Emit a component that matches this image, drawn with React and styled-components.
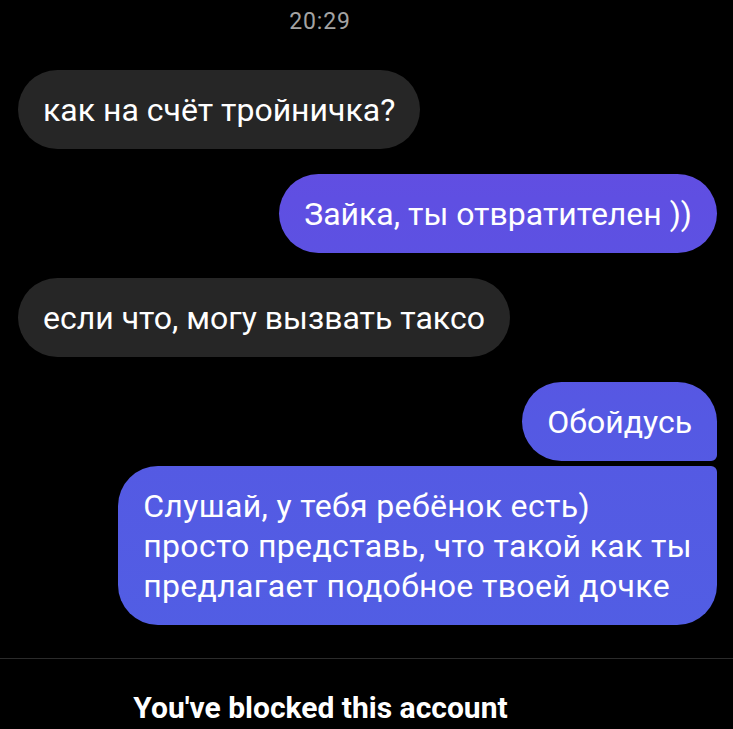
import React from "react";
import styled, { createGlobalStyle } from "styled-components";

const GlobalStyle = createGlobalStyle`
  html, body {
    margin: 0;
    padding: 0;
    background: #000;
  }
  body {
    font-family: Roboto, "Noto Sans", "Liberation Sans", sans-serif;
    -webkit-font-smoothing: antialiased;
  }
`;

const Screen = styled.div`
  width: 733px;
  height: 729px;
  background: #000;
  display: flex;
  flex-direction: column;
  overflow: hidden;
`;

const Thread = styled.div`
  display: flex;
  flex-direction: column;
  padding: 0 16px 0 18px;
  height: 658px;
  box-sizing: border-box;
`;

// the screenshot is cropped, so the centre line sits left of the middle
const Time = styled.div`
  text-align: center;
  color: #a3a3a3;
  font-size: 23px;
  line-height: 28px;
  letter-spacing: 0.8px;
  padding: 8px 95px 9px 0;
`;

const Bubble = styled.div`
  align-self: ${(p) => (p.$mine ? "flex-end" : "flex-start")};
  max-width: 620px;
  box-sizing: border-box;
  padding: 19.5px 25px;
  font-size: 32px;
  line-height: 40px;
  letter-spacing: ${(p) => (p.$long ? "0.35px" : "0")};
  color: #fff;
  white-space: nowrap;
  border-radius: ${(p) => p.$radius || "40px"};
  margin-top: ${(p) => (p.$grouped ? "5px" : "25px")};
  background: ${(p) =>
    p.$mine
      ? "linear-gradient(180deg, #6a48df 0px, #5f4fe2 200px, #5559e3 420px, #505fe4 700px) fixed"
      : "#262626"};
`;

const Footer = styled.div`
  border-top: 1px solid #2b2b2b;
  flex: 1;
  display: flex;
  justify-content: center;
  align-items: flex-start;
  padding: 31px 92px 0 0;
`;

const Blocked = styled.div`
  color: #fff;
  font-weight: 700;
  font-size: 30px;
  line-height: 36px;
`;

const messages = [
  { lines: ["как на счёт тройничка?"] },
  { lines: ["Зайка, ты отвратителен ))"], mine: true },
  { lines: ["если что, могу вызвать таксо"] },
  { lines: ["Обойдусь"], mine: true, radius: "40px 40px 6px 40px" },
  {
    lines: [
      "Слушай, у тебя ребёнок есть)",
      "просто представь, что такой как ты",
      "предлагает подобное твоей дочке",
    ],
    mine: true,
    grouped: true,
    radius: "40px 6px 40px 40px",
  },
];

export default function App() {
  return (
    <Screen>
      <GlobalStyle />
      <Thread>
        <Time>20:29</Time>
        {messages.map((m, i) => (
          <Bubble
            key={i}
            $mine={m.mine}
            $grouped={m.grouped}
            $radius={m.radius}
            $long={m.lines.length > 1}
          >
            {m.lines.map((l, j) => (
              <React.Fragment key={j}>
                {j > 0 && <br />}
                {l}
              </React.Fragment>
            ))}
          </Bubble>
        ))}
      </Thread>
      <Footer>
        <Blocked>You've blocked this account</Blocked>
      </Footer>
    </Screen>
  );
}
